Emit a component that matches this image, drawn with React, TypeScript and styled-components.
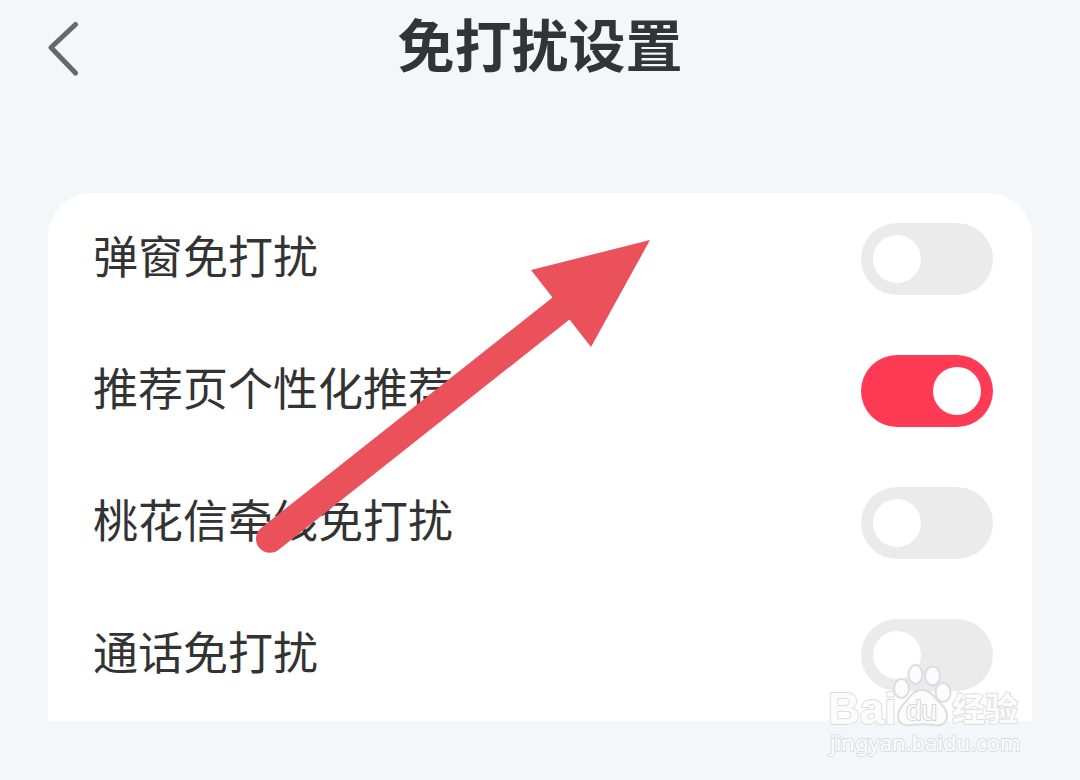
import { useState } from "react";
import styled, { createGlobalStyle } from "styled-components";

const GlobalStyle = createGlobalStyle`
  *, *::before, *::after { box-sizing: border-box; }
  body {
    margin: 0;
    background: #f4f6fa;
    color: #333333;
    font-family: "Noto Sans CJK SC", sans-serif;
  }
`;

const Page = styled.div`
  position: relative;
  min-height: 100vh;
  padding: 0 48px 58px;
`;

const Header = styled.header`
  display: grid;
  grid-template-columns: 48px 1fr 48px;
  align-items: start;
  height: 96px;
  margin-bottom: 97px;
`;

const BackButton = styled.button`
  display: flex;
  align-items: center;
  height: 96px;
  padding: 0;
  border: 0;
  background: none;
  color: #67686b;
  cursor: pointer;
`;

const Title = styled.h1`
  margin: 0;
  font-size: 57px;
  line-height: 84px;
  font-weight: 700;
  text-align: center;
  white-space: nowrap;
  color: #323437;
`;

const Card = styled.main`
  position: relative;
  background: #ffffff;
  border-radius: 44px 44px 0 0;
`;

const List = styled.ul`
  margin: 0;
  padding: 0;
  list-style: none;
`;

const Row = styled.li`
  display: flex;
  align-items: center;
  justify-content: space-between;
  height: 132px;
  padding: 0 39px 0 45px;
`;

const RowLabel = styled.label`
  padding-bottom: 8px;
  font-size: 45px;
  line-height: 64px;
  white-space: nowrap;
`;

const Switch = styled.input`
  appearance: none;
  display: flex;
  align-items: center;
  flex: none;
  width: 132px;
  height: 72px;
  margin: 0;
  padding: 0 12px;
  border-radius: 36px;
  background: #ebebeb;
  cursor: pointer;

  &::before {
    content: "";
    width: 48px;
    height: 48px;
    border-radius: 50%;
    background: #ffffff;
  }

  &:checked {
    justify-content: flex-end;
    background: #ff3a55;
  }
`;

const Arrow = styled.svg`
  position: absolute;
  top: 45px;
  left: 206px;
  width: 398px;
  height: 318px;
  pointer-events: none;
`;

const Watermark = styled.svg`
  position: absolute;
  right: 52px;
  bottom: 18px;
  width: 204px;
  height: 102px;
  pointer-events: none;
  fill: #fcfcfd;
  stroke: #dcdde0;
  stroke-width: 2px;
  stroke-linejoin: round;

  text {
    paint-order: stroke;
  }
`;

const BrandText = styled.text`
  font-family: "Liberation Sans", sans-serif;
  font-size: 44px;
  font-weight: 700;
`;

const PawText = styled.text`
  font-family: "Liberation Sans", sans-serif;
  font-size: 28px;
  stroke: #d2d3d6;
`;

const ChineseText = styled.text`
  font-family: "Noto Sans CJK SC", sans-serif;
  font-size: 33px;
  font-weight: 700;
`;

const SiteText = styled.text`
  font-family: "Noto Sans", sans-serif;
  font-size: 22px;
`;

const settings = [
  { id: "popup", label: "弹窗免打扰", on: false },
  { id: "recommend", label: "推荐页个性化推荐", on: true },
  { id: "letter", label: "桃花信牵线免打扰", on: false },
  { id: "call", label: "通话免打扰", on: false },
];

function SettingRow({ id, label, on }: { id: string; label: string; on: boolean }) {
  const [checked, setChecked] = useState(on);
  return (
    <Row>
      <RowLabel htmlFor={id}>{label}</RowLabel>
      <Switch
        id={id}
        type="checkbox"
        role="switch"
        checked={checked}
        onChange={(event) => setChecked(event.target.checked)}
      />
    </Row>
  );
}

export default function App() {
  return (
    <>
      <GlobalStyle />
      <Page>
        <Header>
          <BackButton type="button" aria-label="返回">
            <svg width="32" height="56" viewBox="0 0 32 56" fill="none" aria-hidden="true">
              <path
                d="M27.5 4.5 3 27.5 27.5 53"
                stroke="currentColor"
                strokeWidth="5"
                strokeLinecap="round"
                strokeLinejoin="round"
              />
            </svg>
          </BackButton>
          <Title>免打扰设置</Title>
        </Header>
        <Card>
          <List>
            {settings.map((item) => (
              <SettingRow key={item.id} {...item} />
            ))}
          </List>
          <Arrow viewBox="254 238 398 318" aria-hidden="true">
            <path
              d="M650 240 531 270 552.5 297.5 261 528A14 14 0 0 0 279 549.5L569.5 319.5 591 347Z"
              fill="#ea515b"
            />
          </Arrow>
        </Card>
        <Watermark viewBox="824 660 204 102" aria-hidden="true">
          <BrandText x="828" y="724">Bai</BrandText>
          <ellipse cx="901.5" cy="688.5" rx="7.5" ry="9.5" />
          <ellipse cx="915.5" cy="674.5" rx="7" ry="9.5" />
          <ellipse cx="932.5" cy="676" rx="7.5" ry="9.5" />
          <ellipse cx="943" cy="692.5" rx="7.5" ry="9.5" />
          <path d="M922 690C928 690 932 693 936 699 940 704 947 707 947 716 947 724 941 726 934 725 926 724 919 724 911 725 903 726 898 723 898 716 898 708 904 704 908 699 912 693 916 690 922 690Z" />
          <PawText x="906" y="720">du</PawText>
          <ChineseText x="952" y="721">经验</ChineseText>
          <SiteText x="830" y="751">jingyan.baidu.com</SiteText>
        </Watermark>
      </Page>
    </>
  );
}
